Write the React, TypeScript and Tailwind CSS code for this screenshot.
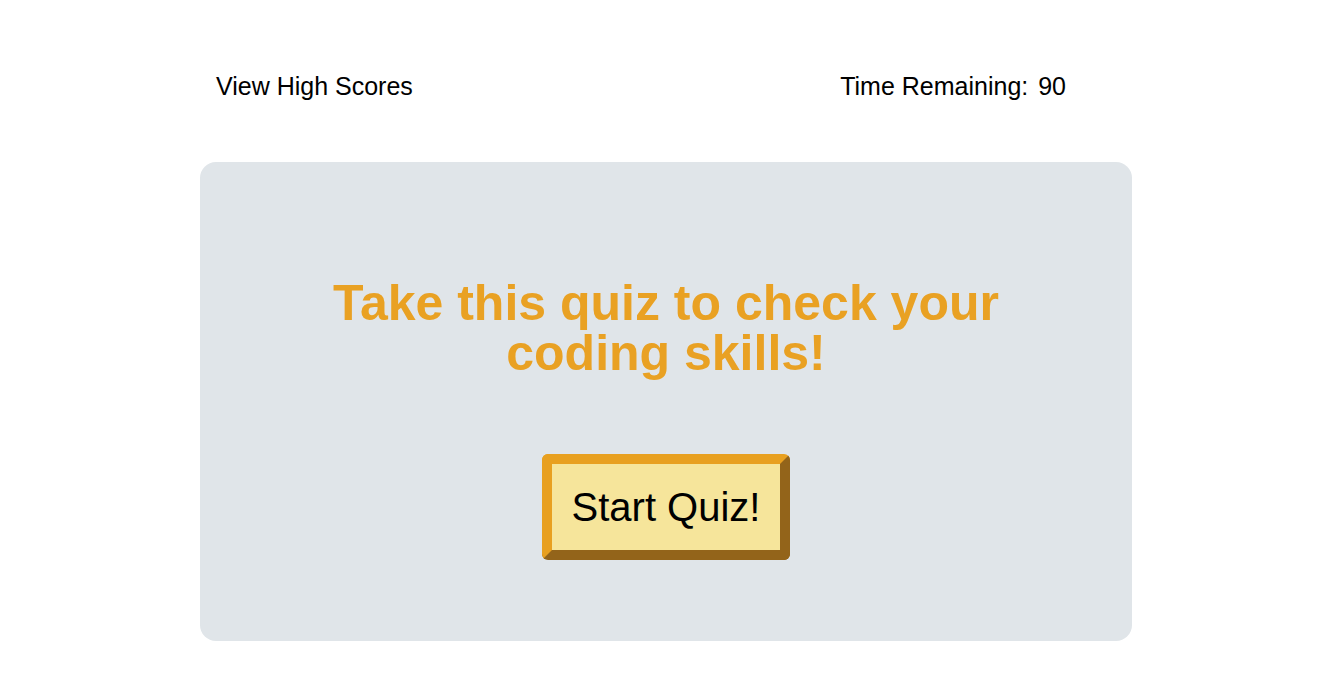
import React from "react";

export default function App() {
  return (
    <div className="min-h-screen bg-white font-['Liberation_Sans',Arial,sans-serif] text-black">
      <div className="mx-auto w-[932px] pt-[72px]">
        <header className="flex items-center justify-between pl-[16px] pr-[66px] text-[25px] leading-[28px]">
          <span>View High Scores</span>
          <span>
            Time Remaining: <span className="ml-[3px]">90</span>
          </span>
        </header>
        <main className="mt-[62px] flex h-[479px] flex-col items-center rounded-[16px] bg-[#e0e5e9] pt-[116px]">
          <h1 className="max-w-[740px] text-center text-[50px] font-bold leading-[50px] text-[#e9a123]">
            Take this quiz to check your coding skills!
          </h1>
          <button className="mt-[76px] rounded-[6px] border-[10px] border-t-[#e8a020] border-l-[#e8a020] border-r-[#93641a] border-b-[#93641a] bg-[#f6e59b] px-[20px] py-[20px] text-[40px] leading-[46px] text-black">
            Start Quiz!
          </button>
        </main>
      </div>
    </div>
  );
}
